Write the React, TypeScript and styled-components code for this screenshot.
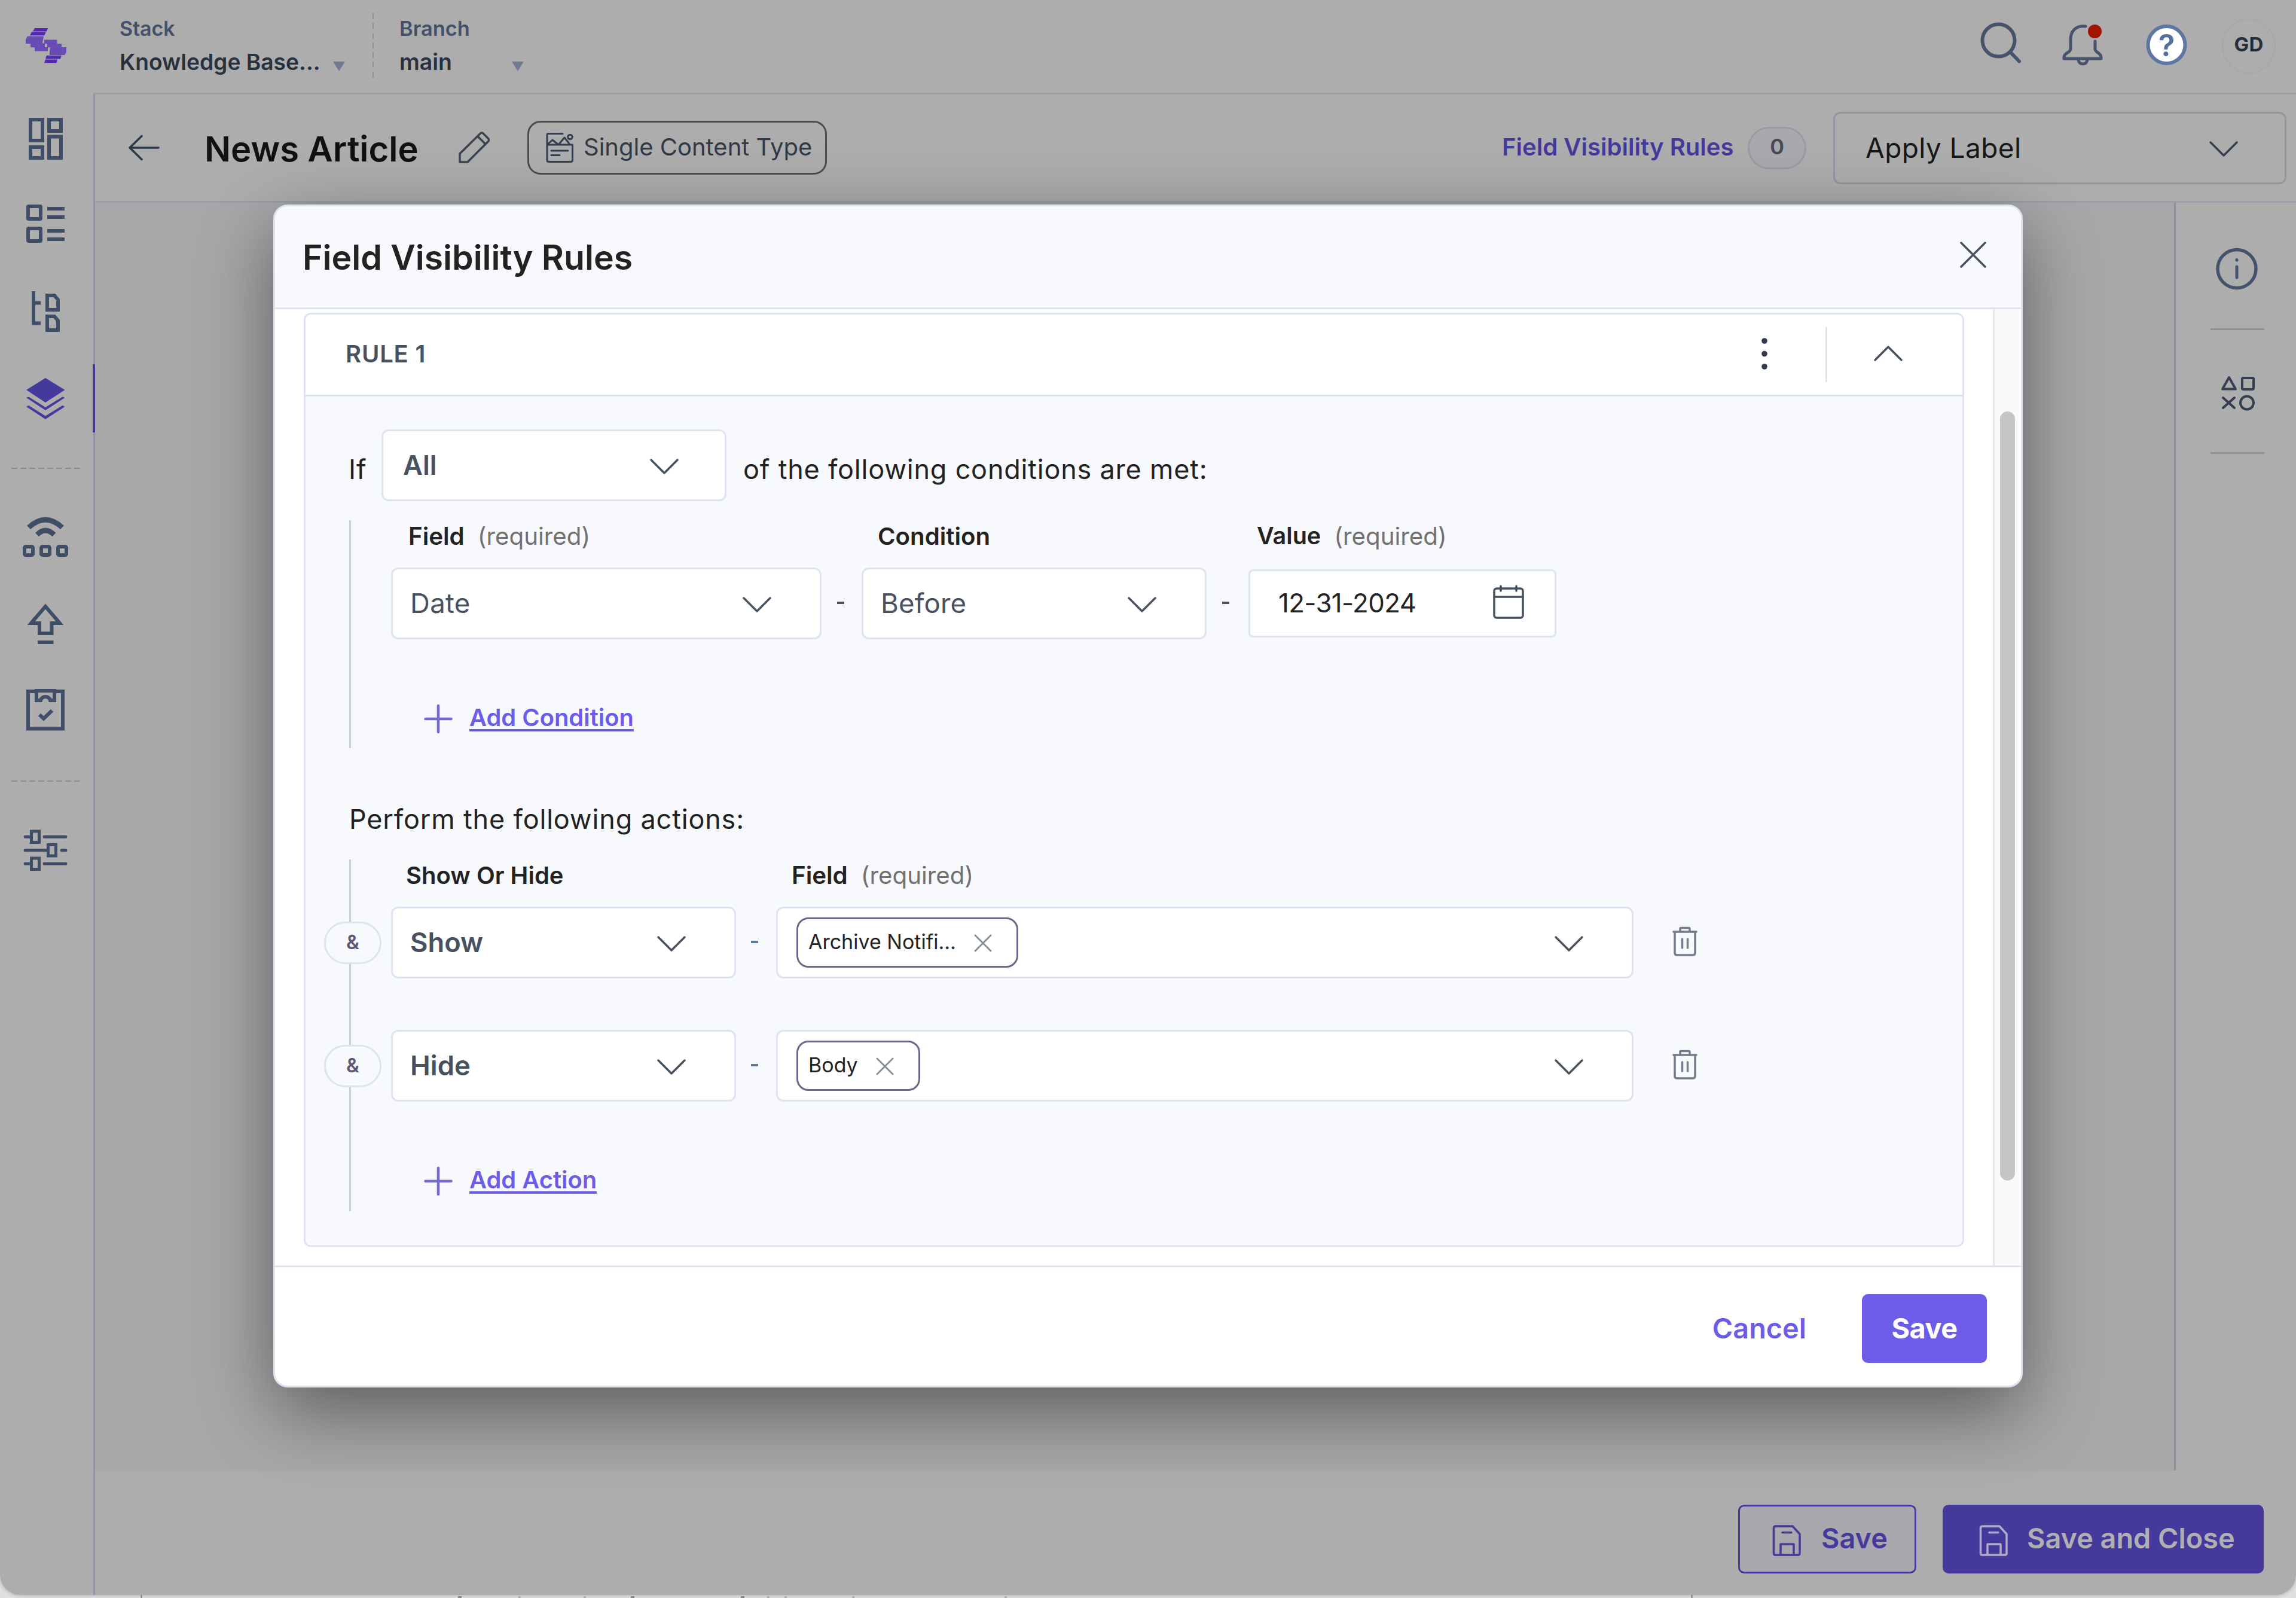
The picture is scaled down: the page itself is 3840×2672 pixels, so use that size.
import React from "react";
import styled, { createGlobalStyle } from "styled-components";

const c = {
  dim: "#adadad",
  dimCanvas: "#a8a8aa",
  dimLine: "#9a9ea6",
  dimIcon: "#3f4d66",
  dimPurple: "#46399c",
  line: "#dde4f0",
  soft: "#f8f9fd",
  purple: "#6c5ce7",
  slate: "#475161",
  ink: "#222222",
};

const GlobalStyle = createGlobalStyle`
  *, *::before, *::after { box-sizing: border-box; }
  body { margin: 0; background: #dedede; font-family: Inter, "Liberation Sans", sans-serif; line-height: 1; }
  svg { display: block; flex: none; overflow: visible; }
`;

const Page = styled.div`
  position: relative;
  width: 3840px;
  height: 2672px;
  overflow: hidden;
  background: #e0e0e1;
`;

const Shell = styled.div`
  display: flex;
  flex-direction: column;
  height: 2667px;
  background: ${c.dim};
  border-radius: 0 0 34px 34px;
  overflow: hidden;
`;

const ShellShadow = styled.div`
  border-radius: 0 0 34px 34px;
  box-shadow: 0 0 7px rgba(60, 60, 60, 0.35);
`;

const Text = styled.span<{ $s: number; $w?: number; $c?: string; $ls?: number; $up?: number; $down?: number }>`
  display: inline-block;
  flex: none;
  font-size: ${(p) => p.$s}px;
  font-weight: ${(p) => p.$w ?? 400};
  color: ${(p) => p.$c ?? c.ink};
  letter-spacing: ${(p) => p.$ls ?? 0}px;
  padding-bottom: ${(p) => p.$up ?? 0}px;
  padding-top: ${(p) => p.$down ?? 0}px;
  white-space: nowrap;
`;

const IconNudge = styled.span<{ $up?: number; $down?: number }>`
  display: block;
  flex: none;
  padding: ${(p) => p.$down ?? 0}px 0 ${(p) => p.$up ?? 0}px;
`;

/* ---------- top bar ---------- */

const TopBar = styled.header`
  display: flex;
  height: 158px;
  flex: none;
`;

const TopMain = styled.div`
  display: flex;
  align-items: flex-start;
  flex: 1;
  border-bottom: 3px solid ${c.dimLine};
`;

const Picker = styled.div<{ $ml: number; $w: number }>`
  display: flex;
  flex-direction: column;
  gap: 16px;
  width: ${(p) => p.$w}px;
  margin-left: ${(p) => p.$ml}px;
  padding-top: 28px;
`;

const PickerLine = styled.div`
  display: flex;
  align-items: center;
  justify-content: space-between;
  height: 40px;
`;

const Caret = styled.i`
  margin: 14px 1px 0 0;
  border: 10.5px solid transparent;
  border-top: 16px solid #6f7c90;
  border-bottom: 0;
`;

const PickerDivider = styled.div`
  width: 2px;
  height: 108px;
  margin: 22px 0 0 45px;
  background: repeating-linear-gradient(#8f949d 0 10px, transparent 10px 16.3px);
`;

const TopTools = styled.div`
  display: flex;
  gap: 48px;
  margin-left: auto;
  padding-right: 34px;
`;

const Avatar = styled.div`
  display: flex;
  align-items: center;
  justify-content: center;
  width: 90px;
  height: 92px;
  margin-top: 31px;
  border: 2px solid #a7a8aa;
  border-radius: 50%;
`;

/* ---------- frame ---------- */

const Middle = styled.div`
  display: flex;
  flex: 1;
  min-height: 0;
`;

const Sidebar = styled.nav`
  width: 159px;
  flex: none;
  border-right: 3px solid #8f96a2;
`;

const NavItem = styled.div<{ $active?: boolean }>`
  position: relative;
  height: 146px;
  &::after {
    content: "";
    display: ${(p) => (p.$active ? "block" : "none")};
    position: absolute;
    top: 13px;
    right: -3px;
    width: 4px;
    height: 114px;
    background: ${c.dimPurple};
  }
`;

const NavBreak = styled.div<{ $h: number; $top: number }>`
  height: ${(p) => p.$h}px;
  padding: ${(p) => p.$top}px 0 0 19px;
  &::before {
    content: "";
    display: block;
    width: 115px;
    height: 2px;
    background: repeating-linear-gradient(90deg, #8d8d93 0 10px, transparent 10px 15px);
  }
`;

const Work = styled.div`
  display: flex;
  flex-direction: column;
  flex: 1;
`;

const EntryBar = styled.div`
  display: flex;
  align-items: center;
  height: 181px;
  padding: 0 16px 0 41px;
  border-bottom: 3px solid ${c.dimLine};
`;

const EntryTitle = styled.div`
  display: flex;
  width: 418px;
  margin-left: 62px;
`;

const TypePill = styled.div`
  display: flex;
  align-items: center;
  gap: 14px;
  width: 501px;
  height: 90px;
  margin-left: 56px;
  padding-left: 25px;
  border: 3px solid #4c4c4c;
  border-radius: 22px;
`;

const RulesLink = styled.div`
  display: flex;
  width: 411px;
  margin-left: auto;
`;

const CountBadge = styled.div`
  display: flex;
  align-items: center;
  justify-content: center;
  width: 98px;
  height: 71px;
  margin-right: 45px;
  border: 3px solid #969ba5;
  border-radius: 36px;
  background: #a8a9ad;
`;

const LabelSelect = styled.div`
  display: flex;
  align-items: center;
  justify-content: space-between;
  width: 758px;
  height: 121px;
  padding: 0 78px 0 51px;
  border: 3px solid #9197a1;
  border-radius: 12px;
`;

const Canvas = styled.div`
  display: flex;
  justify-content: flex-end;
  height: 2120px;
  background: ${c.dimCanvas};
`;

const Rail = styled.aside`
  width: 204px;
  border-left: 3px solid #8e8e99;
  background: ${c.dim};
`;

const RailRule = styled.div`
  width: 90px;
  height: 3px;
  margin-left: 58px;
  background: #8f8f97;
`;

const ActionBar = styled.div`
  display: flex;
  align-items: flex-start;
  justify-content: flex-end;
  gap: 44px;
  flex: 1;
  padding: 57px 54px 0 0;
`;

const ShellButton = styled.button<{ $filled?: boolean }>`
  display: flex;
  align-items: center;
  gap: ${(p) => (p.$filled ? 30 : 32)}px;
  width: ${(p) => (p.$filled ? 537 : 298)}px;
  height: 115px;
  padding: 0 0 0 ${(p) => (p.$filled ? 57 : 53)}px;
  border: 3px solid ${c.dimPurple};
  border-radius: 10px;
  background: ${(p) => (p.$filled ? c.dimPurple : "#a8a8ae")};
  font-family: inherit;
`;

/* ---------- modal ---------- */

const Backdrop = styled.div`
  position: absolute;
  inset: 0;
  display: flex;
  align-items: flex-start;
  padding: 342px 0 0 457px;
`;

const Modal = styled.section`
  display: flex;
  flex-direction: column;
  width: 2926px;
  height: 1978px;
  border: 3px solid ${c.line};
  border-radius: 24px;
  background: #fff;
  box-shadow: 0 40px 125px rgba(0, 0, 0, 0.45);
  overflow: hidden;
`;

const ModalHead = styled.div`
  display: flex;
  align-items: center;
  justify-content: space-between;
  height: 172px;
  flex: none;
  padding: 0 58px 0 46px;
  background: ${c.soft};
  border-bottom: 3px solid ${c.line};
`;

const ModalBody = styled.div`
  display: flex;
  flex: 1;
  min-height: 0;
`;

const ScrollArea = styled.div`
  flex: 1;
  padding: 6px 48px 0;
`;

const ScrollTrack = styled.div`
  width: 47px;
  padding: 171px 0 0 9px;
  border-left: 3px solid #e8e8e8;
  background: #fafafa;
`;

const ScrollThumb = styled.div`
  width: 25px;
  height: 1286px;
  border-radius: 13px;
  background: #c5c5c5;
`;

const ModalFoot = styled.div`
  display: flex;
  justify-content: flex-end;
  gap: 93px;
  height: 201px;
  flex: none;
  padding: 45px 57px 0 0;
  border-top: 3px solid ${c.line};
`;

const ModalButton = styled.button<{ $primary?: boolean }>`
  display: flex;
  align-items: center;
  justify-content: center;
  width: ${(p) => (p.$primary ? "209px" : "auto")};
  height: 115px;
  padding: 0;
  border: 0;
  border-radius: 10px;
  background: ${(p) => (p.$primary ? c.purple : "transparent")};
  font-family: inherit;
`;

const RuleCard = styled.div`
  display: flex;
  flex-direction: column;
  width: 2777px;
  height: 1562px;
  border: 3px solid ${c.line};
  border-radius: 12px;
  overflow: hidden;
`;

const RuleHead = styled.div`
  display: flex;
  align-items: center;
  height: 137px;
  flex: none;
  padding: 0 100px 0 67px;
  border-bottom: 3px solid ${c.line};
`;

const RuleTools = styled.div`
  display: flex;
  align-items: center;
  margin-left: auto;
`;

const RuleDivider = styled.div`
  width: 3px;
  height: 92px;
  margin: 0 78px 0 82px;
  background: ${c.line};
`;

const RuleBody = styled.div`
  flex: 1;
  padding: 55px 0 0 72px;
  background: ${c.soft};
`;

const MatchRow = styled.div`
  display: flex;
  align-items: center;
`;

const IfCell = styled.div`
  display: flex;
  width: 55px;
`;

const Select = styled.div<{ $w: number; $lead?: boolean }>`
  display: flex;
  align-items: center;
  justify-content: space-between;
  width: ${(p) => p.$w}px;
  height: 120px;
  padding: ${(p) => (p.$lead ? "0 77px 0 33px" : "0 81px 0 29px")};
  border: 3px solid ${c.line};
  border-radius: 12px;
  background: #fff;
`;

const MatchText = styled.div`
  display: flex;
  margin-left: 28px;
`;

const Group = styled.div<{ $mt: number; $h: number }>`
  height: ${(p) => p.$h}px;
  margin: ${(p) => p.$mt}px 0 0 1px;
  padding: 7px 0 0 67px;
  border-left: 3px solid #c9cdd8;
`;

const FieldGrid = styled.div<{ $cols: string }>`
  display: grid;
  grid-template-columns: ${(p) => p.$cols};
  align-items: center;
`;

const FieldLabel = styled.div<{ $pl: number; $col: number }>`
  grid-column: ${(p) => p.$col};
  display: flex;
  align-items: center;
  gap: 22px;
  height: 40px;
  margin-bottom: 32px;
  padding-left: ${(p) => p.$pl}px;
`;

const Dash = styled.i<{ $c?: string; $left?: number }>`
  justify-self: center;
  width: 12px;
  height: 4px;
  margin: 0 ${(p) => p.$left ?? 0}px 3px 0;
  background: ${(p) => p.$c ?? "#4d5260"};
`;

const DateInput = styled.div`
  display: flex;
  align-items: center;
  justify-content: space-between;
  width: 515px;
  height: 114px;
  padding: 0 51px 0 47px;
  border: 3px solid ${c.line};
  border-radius: 8px;
  background: #fff;
`;

const AddLink = styled.div`
  display: flex;
  align-items: center;
  gap: 29px;
  height: 44px;
  margin-top: 109px;
  padding-left: 56px;
`;

const Linked = styled(Text)`
  text-decoration: underline;
  text-decoration-thickness: 4px;
  text-underline-offset: 5px;
  text-decoration-skip-ink: none;
`;

const ActionsTitle = styled.div`
  display: flex;
  align-items: center;
  height: 50px;
  margin-top: 93px;
  padding-left: 1px;
`;

const ActionRow = styled.div<{ $gap?: number }>`
  position: relative;
  display: grid;
  grid-template-columns: 576px 68px 1434px auto;
  align-items: center;
  margin-top: ${(p) => p.$gap ?? 0}px;
`;

const AndBadge = styled.div`
  position: absolute;
  left: -112px;
  top: 25px;
  display: flex;
  align-items: center;
  justify-content: center;
  width: 96px;
  height: 71px;
  border: 3px solid ${c.line};
  border-radius: 36px;
  background: ${c.soft};
`;

const TagSelect = styled(Select)`
  padding-left: 31px;
`;

const Tag = styled.div`
  display: flex;
  align-items: center;
  gap: 30px;
  height: 84px;
  padding: 0 41px 0 17px;
  border: 3px solid #6e6787;
  border-radius: 20px;
`;

const TrashCell = styled.div`
  margin: 0 0 2px 65px;
`;

/* ---------- icons ---------- */

const Chevron = ({ up, color = c.slate, drop = 4 }: { up?: boolean; color?: string; drop?: number }) => (
  <svg width="48" height={26 + drop} viewBox={`0 ${-drop} 48 ${26 + drop}`} fill="none" stroke={color} strokeWidth="3.500" strokeLinecap="round" strokeLinejoin="round">
    <path d={up ? "M2 24 24 2 46 24" : "M2 2 24 24 46 2"} />
  </svg>
);

const Cross = ({ size, width, color }: { size: number; width: number; color: string }) => (
  <svg width={size} height={size} viewBox={`0 0 ${size} ${size}`} stroke={color} strokeWidth={width} strokeLinecap="round">
    <path d={`M2 2 ${size - 2} ${size - 2}M${size - 2} 2 2 ${size - 2}`} />
  </svg>
);

const Plus = () => (
  <svg width="46" height="50" viewBox="0 -4 46 50" stroke="#7468cf" strokeWidth="4.500" strokeLinecap="round">
    <path d="M23 1V45M1.500 23H44.500" />
  </svg>
);

const Logo = () => (
  <svg width="156" height="158" viewBox="0 0 156 158">
    <g fill="#5527b5">
      <path d="M58 47H80L78 52.500H55ZM53 53.500H77L74 59.300H50ZM78 92.700H103L101 98.500H76ZM76 99.500H96L94.500 105.300H74Z" />
    </g>
    <g fill="#684cb4">
      <path d="M50 60.500H73L71 72.500H75V79H80V85.500H58V79.300H51V73H43V66L46 60.500Z" />
      <path d="M74 66.500H95.500V73H103V79H111V87L108 92H83V85.500L84 79.300H79V73H74Z" />
    </g>
  </svg>
);

const navIcons = {
  dashboard: (
    <>
      <rect x="51" y="200" width="20" height="35" />
      <rect x="51" y="246" width="20" height="18" />
      <rect x="82" y="200" width="20" height="19" />
      <rect x="82" y="228.500" width="20" height="35.500" />
    </>
  ),
  list: (
    <>
      <rect x="47" y="345" width="21" height="21" rx="1" />
      <rect x="47" y="382" width="21" height="21" rx="1" />
      <path d="M79 349H108M79 363H108M79 386H108M79 400H108" />
    </>
  ),
  tree: (
    <>
      <path d="M56 487V540.500H68M56 506.500H68" />
      <path d="M79 494H91L97 501V518H79ZM79 529H91L97 536V552H79Z" />
    </>
  ),
  layers: (
    <g stroke="none" fill={c.dimPurple}>
      <path d="M76 632 108.500 652 76 673 44 652Z" />
      <path d="M44 665 48 663.500 76 681 104.500 663.500 108.500 665 76 686ZM44 680 48 678 76 695.500 104.500 678 108.500 680 76 701Z" />
    </g>
  ),
  relay: (
    <>
      <path d="M48 882Q76 856 104 882M62 894Q76 880 90.500 894" strokeWidth="8.500" />
      <rect x="41" y="914" width="14" height="14" rx="2" />
      <rect x="69" y="914" width="14" height="14" rx="2" />
      <rect x="97" y="914" width="14" height="14" rx="2" />
    </>
  ),
  publish: <path d="M76 1014 100 1042H86.500V1059H66V1042H52ZM63 1074H89.500" />,
  tasks: (
    <>
      <path d="M60 1156H47V1218.500H105V1156H92M61 1155H91V1171H84Q82 1165 76 1165 70 1165 68 1171H61Z" />
      <path d="M66 1195 73 1201.500 87 1188" />
    </>
  ),
  settings: (
    <g strokeWidth="5">
      <path d="M42 1399.300H51M74 1399.300H110M42 1421.800H80M103 1421.800H110M42 1444.300H51M74 1444.300H110" strokeLinecap="round" />
      <rect x="52.500" y="1390" width="13" height="18.500" />
      <rect x="80.500" y="1412.500" width="13" height="18.500" />
      <rect x="52.500" y="1435" width="13" height="18.500" />
    </g>
  ),
};

const NavIcon = ({ name, top }: { name: keyof typeof navIcons; top: number }) => (
  <svg width="156" height="146" viewBox={`0 ${top} 156 146`} fill="none" stroke={c.dimIcon} strokeWidth="6">
    {navIcons[name]}
  </svg>
);

const SearchIcon = () => (
  <svg width="92" height="155" viewBox="3300 0 92 155" fill="none" stroke="#46546b" strokeWidth="6" strokeLinecap="round">
    <circle cx="3342.500" cy="67.500" r="27" />
    <path d="M3362 87 3377 102.500" />
  </svg>
);

const BellIcon = () => (
  <svg width="92" height="155" viewBox="3440 0 92 155" fill="none" stroke="#46546b" strokeWidth="5" strokeLinejoin="round" strokeLinecap="round">
    <path d="M3488 44C3470 42 3463 54 3463 66V82C3463 88 3452 88 3452 96V98H3514V96C3514 88 3504 88 3504 82V69" />
    <path d="M3476 100Q3477 107 3483.500 107 3490 107 3491 100" />
    <circle cx="3503.500" cy="52.500" r="11.500" fill="#a31501" stroke="none" />
  </svg>
);

const HelpIcon = () => (
  <svg width="88" height="155" viewBox="3580 0 88 155">
    <circle cx="3623.500" cy="75" r="31" fill="#fff" stroke="#5d77a3" strokeWidth="6" />
    <text x="3623.500" y="94" textAnchor="middle" fontSize="51" fontWeight="600" fill="#566f9c">?</text>
  </svg>
);

const BackIcon = () => (
  <svg width="80" height="64" viewBox="200 215 80 64" fill="none" stroke="#2c3848" strokeWidth="3.500" strokeLinecap="round" strokeLinejoin="round">
    <path d="M265 247H217M237 227.500 217 247 237 266.500" />
  </svg>
);

const PencilIcon = () => (
  <svg width="66" height="66" viewBox="760 214 66 66" fill="none" stroke="#3a4252" strokeWidth="3.500" strokeLinejoin="round">
    <path d="M769 271V257L804 222.500Q806 221.500 808 223L817 232Q818 234 817 236L782 271ZM799 228 812 241" />
  </svg>
);

const ContentIcon = () => (
  <svg width="52" height="56" viewBox="910 219 52 56" fill="none" stroke="#333f50" strokeWidth="3" strokeLinejoin="round" strokeLinecap="round">
    <path d="M941 223.500H917Q915 223.500 915 225.500V268Q915 270.500 917.500 270.500H954.500Q957.500 270.500 957.500 268V242H915L924 234 934 242 944 230 952 240" />
    <circle cx="953.500" cy="229" r="3.800" />
    <path d="M922 252H950M922 259.500H936" />
  </svg>
);

const InfoIcon = () => (
  <svg width="201" height="210" viewBox="3639 340 201 210" fill="none" stroke="#44536c" strokeWidth="5.500" strokeLinecap="round">
    <circle cx="3741" cy="450.500" r="32" />
    <path d="M3741 447V465M3741 435.500V436" strokeWidth="5" />
  </svg>
);

const ShapesIcon = () => (
  <svg width="201" height="204" viewBox="3639 552 201 204" fill="none" stroke="#333f50" strokeWidth="4" strokeLinejoin="round" strokeLinecap="round">
    <path d="M3728 631 3739 650.500H3717ZM3718 665 3737 682M3737 665 3718 682" />
    <rect x="3750" y="632" width="19" height="19" rx="2" />
    <circle cx="3758" cy="673.500" r="11" />
  </svg>
);

const SaveIcon = ({ color }: { color: string }) => (
  <svg width="51" height="60" viewBox="2963 2544 51 60" fill="none" stroke={color} strokeWidth="3.500" strokeLinejoin="round" strokeLinecap="round">
    <path d="M2970 2552H2998L3010 2565V2597Q3010 2600 3007 2600H2969Q2966.500 2600 2966.500 2597V2555Q2966.500 2552 2970 2552ZM2978 2600V2582H3000V2600M2981 2562.500H2996" />
  </svg>
);

const KebabIcon = () => (
  <svg width="40" height="60" viewBox="2930 564 40 60" fill="#2f3b4c">
    <circle cx="2950" cy="571" r="4.800" />
    <circle cx="2950" cy="592.500" r="4.800" />
    <circle cx="2950" cy="614" r="4.800" />
  </svg>
);

const CalendarIcon = () => (
  <svg width="52" height="60" viewBox="2497 979 52 60" fill="none" stroke={c.slate} strokeWidth="3.500" strokeLinecap="round">
    <rect x="2499" y="984" width="48" height="49" rx="4" />
    <path d="M2499 998H2547M2510 980V988M2536 980V988" />
  </svg>
);

const TrashIcon = () => (
  <svg width="42" height="50" viewBox="2797 1551 42 50" fill="none" stroke="#737b88" strokeWidth="3.500" strokeLinejoin="round" strokeLinecap="round">
    <path d="M2799 1559H2837M2801 1559V1594Q2801 1598 2805 1598H2831Q2835 1598 2835 1594V1559M2810 1559V1554Q2810 1552.500 2812 1552.500H2824Q2826 1552.500 2826 1554V1559M2813.500 1571V1586M2822.500 1571V1586" />
  </svg>
);

/* sliver of the page that continues underneath the app window */
const PageEdge = styled.div`
  position: absolute;
  left: 0;
  bottom: 0;
`;

const edgeStems = [869, 978, 1285, 1314, 1427, 1682];
const edgeHooks = [766, 1055, 1239];

const Required = () => (
  <Text $s={40.3} $c="#717171">(required)</Text>
);

const rows = [
  { verb: "Show", tag: "Archive Notifi...", gap: 0 },
  { verb: "Hide", tag: "Body", gap: 86 },
];

export default function App() {
  return (
    <Page>
      <GlobalStyle />
      <ShellShadow>
        <Shell>
          <TopBar>
            <Logo />
            <TopMain>
              <Picker $ml={44} $w={378}>
                <PickerLine><Text $s={34} $w={600} $c="#42506a" $ls={-0.1}>Stack</Text></PickerLine>
                <PickerLine><Text $s={37.2} $w={600} $c="#28323f">Knowledge Base...</Text><Caret /></PickerLine>
              </Picker>
              <PickerDivider />
              <Picker $ml={43} $w={209}>
                <PickerLine><Text $s={34.4} $w={600} $c="#42506a">Branch</Text></PickerLine>
                <PickerLine><Text $s={37.5} $w={600} $c="#28323f">main</Text><Caret /></PickerLine>
              </Picker>
              <TopTools>
                <SearchIcon />
                <BellIcon />
                <HelpIcon />
                <Avatar><Text $s={33} $w={700} $c="#252f3b" $up={5} $ls={0.3}>GD</Text></Avatar>
              </TopTools>
            </TopMain>
          </TopBar>

          <Middle>
            <Sidebar>
              <NavItem><NavIcon name="dashboard" top={158} /></NavItem>
              <NavItem><NavIcon name="list" top={304} /></NavItem>
              <NavItem><NavIcon name="tree" top={450} /></NavItem>
              <NavItem $active><NavIcon name="layers" top={596} /></NavItem>
              <NavBreak $h={78} $top={40} />
              <NavItem><NavIcon name="relay" top={820} /></NavItem>
              <NavItem><NavIcon name="publish" top={966} /></NavItem>
              <NavItem><NavIcon name="tasks" top={1112} /></NavItem>
              <NavBreak $h={86} $top={47} />
              <NavItem><NavIcon name="settings" top={1344} /></NavItem>
            </Sidebar>

            <Work>
              <EntryBar>
                <BackIcon />
                <EntryTitle><Text $s={58} $w={600} $c="#111" $down={4}>News Article</Text></EntryTitle>
                <PencilIcon />
                <TypePill>
                  <ContentIcon />
                  <Text $s={40} $c="#2f3948" $up={2}>Single Content Type</Text>
                </TypePill>
                <RulesLink><Text $s={40.1} $w={600} $c={c.dimPurple} $up={2}>Field Visibility Rules</Text></RulesLink>
                <CountBadge><Text $s={36} $w={600} $c="#4a4659" $up={5}>0</Text></CountBadge>
                <LabelSelect>
                  <Text $s={46} $c="#181818" $ls={0.4} $up={1}>Apply Label</Text>
                  <Chevron color="#353f4e" drop={3} />
                </LabelSelect>
              </EntryBar>

              <Canvas>
                <Rail>
                  <InfoIcon />
                  <RailRule />
                  <ShapesIcon />
                  <RailRule />
                </Rail>
              </Canvas>

              <ActionBar>
                <ShellButton>
                  <SaveIcon color={c.dimPurple} />
                  <Text $s={46.800} $w={600} $c={c.dimPurple} $up={3}>Save</Text>
                </ShellButton>
                <ShellButton $filled>
                  <SaveIcon color="#b0abc6" />
                  <Text $s={46.800} $w={600} $c="#b0b0b2" $up={3}>Save and Close</Text>
                </ShellButton>
              </ActionBar>
            </Work>
          </Middle>
        </Shell>
      </ShellShadow>

      <PageEdge>
        <svg width="3840" height="8" viewBox="0 0 3840 8">
          <path d="M236.500 3V8M2829.500 3V8" stroke="#77777c" strokeWidth="2" />
          {edgeStems.map((x) => <rect key={x} x={x - 2} y="5" width="4" height="3" fill="#a9aab2" />)}
          {edgeHooks.map((x) => <rect key={x} x={x} y="5" width="6" height="3" fill="#85868f" />)}
        </svg>
      </PageEdge>

      <Backdrop>
        <Modal>
          <ModalHead>
            <Text $s={57.1} $w={600} $down={2}>Field Visibility Rules</Text>
            <IconNudge $up={8}><Cross size={44} width={3.5} color={c.slate} /></IconNudge>
          </ModalHead>

          <ModalBody>
            <ScrollArea>
              <RuleCard>
                <RuleHead>
                  <Text $s={40} $w={600} $c={c.slate} $ls={0.8} $up={2}>RULE 1</Text>
                  <RuleTools>
                    <KebabIcon />
                    <RuleDivider />
                    <IconNudge $up={4}><Chevron up drop={0} /></IconNudge>
                  </RuleTools>
                </RuleHead>

                <RuleBody>
                  <MatchRow>
                    <IfCell><Text $s={45} $ls={0.8} $down={12}>If</Text></IfCell>
                    <Select $w={577} $lead>
                      <Text $s={45.2} $w={600} $c={c.slate}>All</Text>
                      <Chevron />
                    </Select>
                    <MatchText><Text $s={45} $ls={0.78} $down={12}>of the following conditions are met:</Text></MatchText>
                  </MatchRow>

                  <Group $mt={32} $h={381}>
                    <FieldGrid $cols="719px 68px 577px 70px 515px">
                      <FieldLabel $col={1} $pl={29}><Text $s={40.300} $w={600}>Field</Text><Required /></FieldLabel>
                      <FieldLabel $col={3} $pl={27}><Text $s={40.200} $w={600}>Condition</Text></FieldLabel>
                      <FieldLabel $col={5} $pl={14}><Text $s={39.600} $w={600}>Value</Text><Required /></FieldLabel>
                      <Select $w={720}>
                        <Text $s={45.500} $c={c.slate} $ls={0.3}>Date</Text>
                        <Chevron />
                      </Select>
                      <Dash $left={3} />
                      <Select $w={577}>
                        <Text $s={45.500} $c={c.slate} $ls={0.2}>Before</Text>
                        <Chevron />
                      </Select>
                      <Dash $left={6} />
                      <DateInput>
                        <Text $s={43.800} $ls={-0.6}>12-31-2024</Text>
                        <CalendarIcon />
                      </DateInput>
                    </FieldGrid>
                    <AddLink>
                      <Plus />
                      <Linked $s={39.900} $w={600} $c={c.purple}>Add Condition</Linked>
                    </AddLink>
                  </Group>

                  <ActionsTitle><Text $s={45} $ls={0.82}>Perform the following actions:</Text></ActionsTitle>

                  <Group $mt={43} $h={588}>
                    <FieldGrid $cols="576px 68px 1434px">
                      <FieldLabel $col={1} $pl={25}><Text $s={40} $w={600}>Show Or Hide</Text></FieldLabel>
                      <FieldLabel $col={3} $pl={26}><Text $s={40.300} $w={600}>Field</Text><Required /></FieldLabel>
                    </FieldGrid>
                    {rows.map((r) => (
                      <ActionRow key={r.verb} $gap={r.gap}>
                        <AndBadge><Text $s={33} $w={600} $c="#5d5778" $up={3}>&amp;</Text></AndBadge>
                        <Select $w={577}>
                          <Text $s={45.300} $w={600} $c={c.slate}>{r.verb}</Text>
                          <Chevron />
                        </Select>
                        <Dash $c="#5f7798" $left={4} />
                        <TagSelect $w={1434}>
                          <Tag>
                            <Text $s={34} $up={3}>{r.tag}</Text>
                            <IconNudge $down={2}><Cross size={30} width={2.8} color="#858c98" /></IconNudge>
                          </Tag>
                          <Chevron />
                        </TagSelect>
                        <TrashCell><TrashIcon /></TrashCell>
                      </ActionRow>
                    ))}
                    <AddLink>
                      <Plus />
                      <Linked $s={39.900} $w={600} $c={c.purple}>Add Action</Linked>
                    </AddLink>
                  </Group>
                </RuleBody>
              </RuleCard>
            </ScrollArea>
            <ScrollTrack><ScrollThumb /></ScrollTrack>
          </ModalBody>

          <ModalFoot>
            <ModalButton><Text $s={46.800} $w={600} $c={c.purple} $up={2}>Cancel</Text></ModalButton>
            <ModalButton $primary><Text $s={46.800} $w={700} $c="#fff" $ls={-0.5} $up={2}>Save</Text></ModalButton>
          </ModalFoot>
        </Modal>
      </Backdrop>
    </Page>
  );
}
